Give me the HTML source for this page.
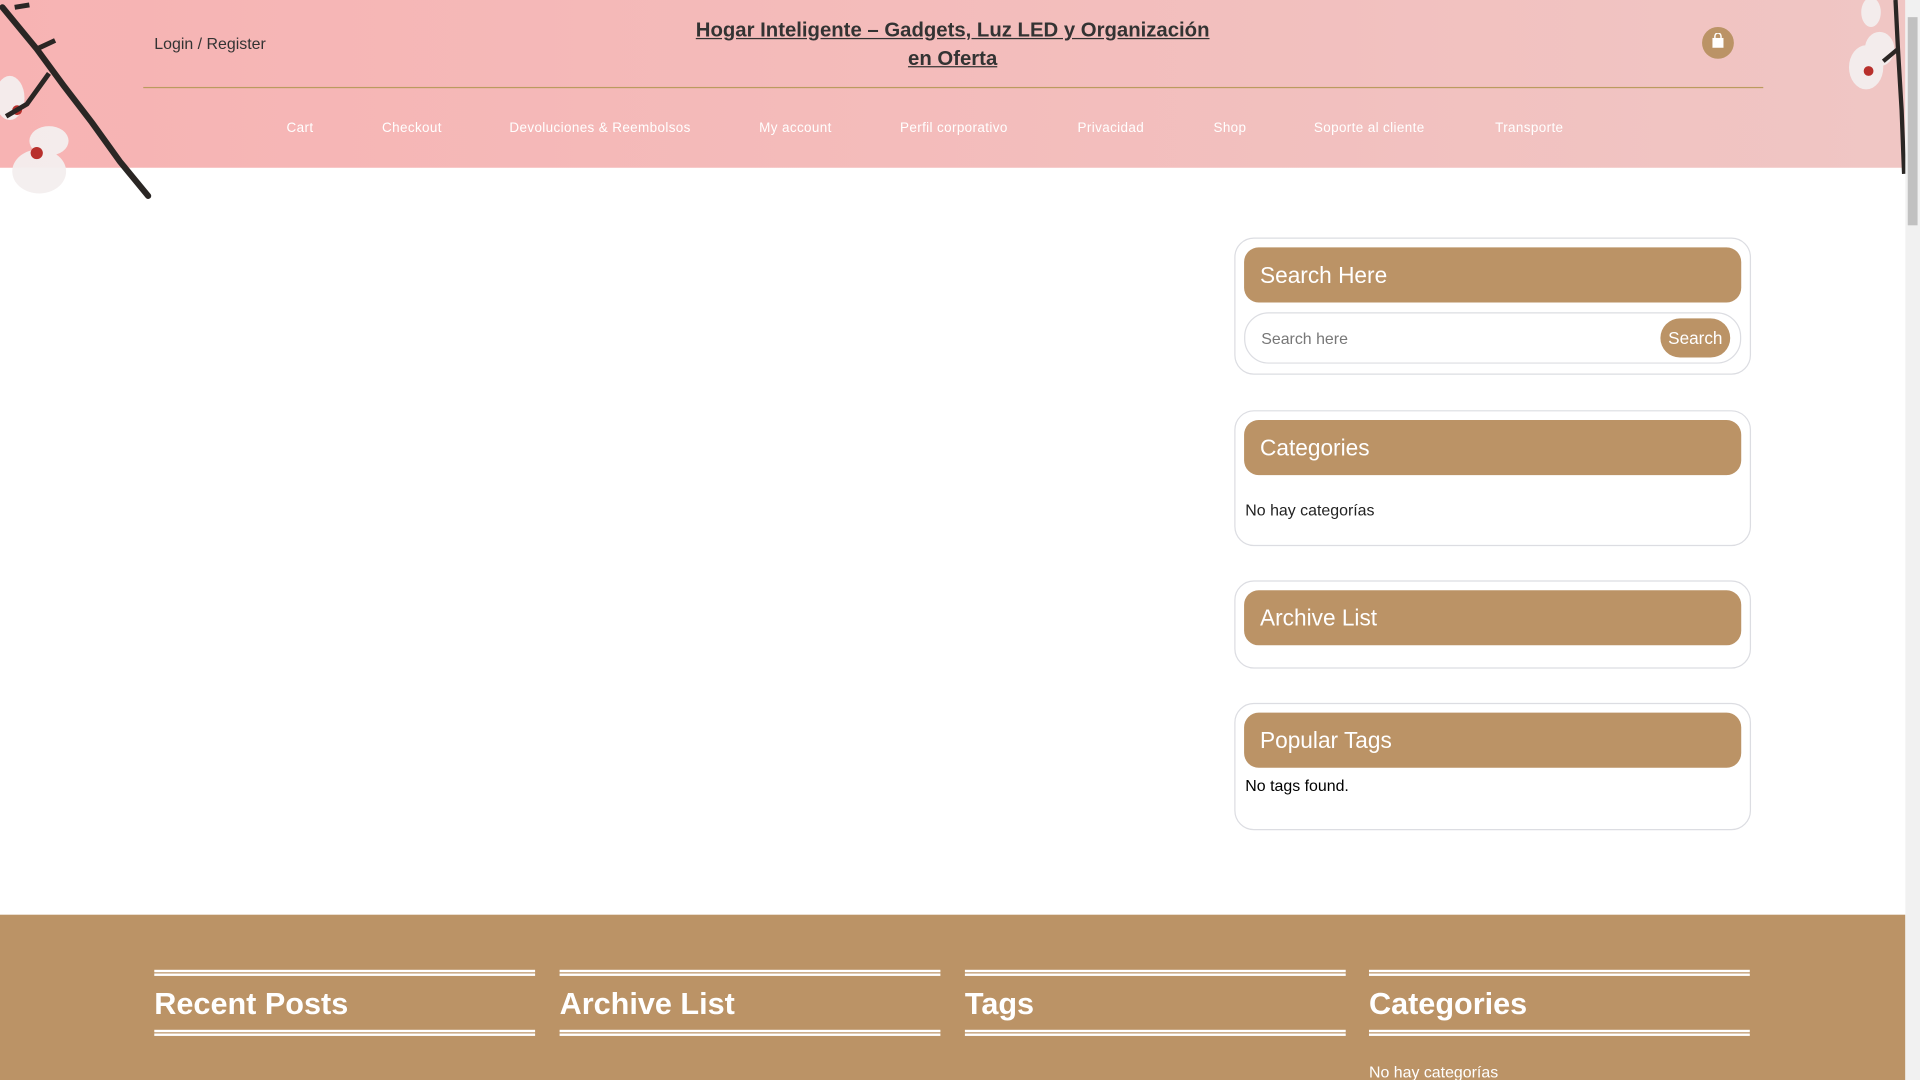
<!DOCTYPE html>
<html><head><meta charset="utf-8"><style>
html,body{margin:0;padding:0;width:1920px;height:1080px;overflow:hidden;background:#fff}
#w{position:absolute;left:0;top:0;width:1568px;height:882px;transform:scale(1.22449);transform-origin:0 0;font-family:"Liberation Sans",sans-serif}
.a{position:absolute}
.hdr{left:0;top:0;width:1556px;height:137px;background:linear-gradient(90deg,#f7b3b3,#f0c6c4)}
.nav{top:99px;font-size:11px;color:#fff;letter-spacing:.3px}
.card{position:absolute;left:1008px;width:420px;border:1px solid #dcdde2;border-radius:16px;background:#fff}
.ch{margin:7px 7px 0 7px;height:45px;background:#bb9366;border-radius:12px;color:#fff;font-size:18.5px;line-height:45px;padding-left:13px}
.ft{position:absolute;left:0;top:747px;width:1556px;height:135px;background:#bb9366}
.col{position:absolute;top:45px;width:311px;color:#fff}
.dl{border-top:2px solid #fff;border-bottom:2px solid #fff;height:1px}
.col h3{margin:4px 0 0;font-size:25px;font-weight:bold;height:40px;line-height:38px}
</style></head><body><div id="w">
<div class="a hdr"></div>
<svg class="a" style="left:0;top:0" width="1568" height="170">
 <g fill="#f4efef" opacity=".95"><ellipse cx="8" cy="80" rx="12" ry="18"/><ellipse cx="40" cy="115" rx="16" ry="12"/><ellipse cx="32" cy="140" rx="22" ry="18"/><ellipse cx="1524" cy="55" rx="14" ry="18"/><ellipse cx="1535" cy="40" rx="12" ry="14"/><ellipse cx="1528" cy="10" rx="8" ry="12"/></g>
 <g fill="#b8302c"><circle cx="14" cy="90" r="4"/><circle cx="30" cy="125" r="5"/><circle cx="1526" cy="58" r="4"/></g>
 <path d="M2 6 L30 40 L52 70 L75 100 L98 132 L121 160" stroke="#2a2624" stroke-width="5" fill="none" stroke-linecap="round"/>
 <path d="M30 40 L45 33 M40 60 L22 85 L5 95 M12 6 L24 4" stroke="#2a2624" stroke-width="4" fill="none"/>
 <path d="M1548 0 L1550 40 L1553 90 L1555 142 M1550 40 L1538 50" stroke="#2a2624" stroke-width="3.5" fill="none"/>
</svg>
<div class="a" style="left:126px;top:28px;font-size:13px;color:#333">Login / Register</div>
<div class="a" style="left:560px;top:13px;width:436px;text-align:center;font-size:16.6px;font-weight:bold;color:#333;text-decoration:underline;line-height:23px">Hogar Inteligente – Gadgets, Luz LED y Organización en Oferta</div>
<div class="a" style="left:1390px;top:22px;width:26px;height:26px;border-radius:50%;background:#bb9366"></div>
<svg class="a" style="left:1397px;top:27px" width="12" height="14"><path d="M3.5 4V2.5a2.5 2.5 0 0 1 5 0V4" stroke="#fff" stroke-width="1.2" fill="none"/><rect x="1.5" y="4" width="9" height="8" fill="#fff"/></svg>
<div class="a" style="left:117px;top:71px;width:1323px;height:1px;background:#bb9b5f"></div>
<div class="a nav" style="left:234px">Cart</div>
<div class="a nav" style="left:312px">Checkout</div>
<div class="a nav" style="left:416px">Devoluciones &amp; Reembolsos</div>
<div class="a nav" style="left:620px">My account</div>
<div class="a nav" style="left:735px">Perfil corporativo</div>
<div class="a nav" style="left:880px">Privacidad</div>
<div class="a nav" style="left:991px">Shop</div>
<div class="a nav" style="left:1073px">Soporte al cliente</div>
<div class="a nav" style="left:1221px">Transporte</div>

<div class="card" style="top:194px;height:110px"><div class="ch">Search Here</div>
<div style="margin:8px 7px 0;height:40px;border:1px solid #dcdde2;border-radius:20px;position:relative"><span style="position:absolute;left:13px;top:13px;font-size:13px;color:#777">Search here</span><div style="position:absolute;right:8px;top:4px;width:57px;height:32px;border-radius:16px;background:#bb9366;color:#fff;font-size:14px;line-height:32px;text-align:center">Search</div></div></div>
<div class="card" style="top:335px;height:109px"><div class="ch">Categories</div><div style="margin:21px 0 0 8px;font-size:13px;color:#222">No hay categorías</div></div>
<div class="card" style="top:474px;height:70px"><div class="ch">Archive List</div></div>
<div class="card" style="top:574px;height:102px"><div class="ch">Popular Tags</div><div style="margin:7px 0 0 8px;font-size:13px;color:#000">No tags found.</div></div>

<div class="ft">
<div class="col" style="left:126px"><div class="dl"></div><h3>Recent Posts</h3><div class="dl"></div></div>
<div class="col" style="left:457px"><div class="dl"></div><h3>Archive List</h3><div class="dl"></div></div>
<div class="col" style="left:788px"><div class="dl"></div><h3>Tags</h3><div class="dl"></div></div>
<div class="col" style="left:1118px"><div class="dl"></div><h3>Categories</h3><div class="dl"></div><div style="margin-top:22px;font-size:13px">No hay categorías</div></div>
</div>
<div class="a" style="left:1556px;top:0;width:12px;height:882px;background:#f1f1f1"></div>
<div class="a" style="left:1558px;top:14px;width:8px;height:170px;background:#c1c1c1"></div>
</div></body></html>
